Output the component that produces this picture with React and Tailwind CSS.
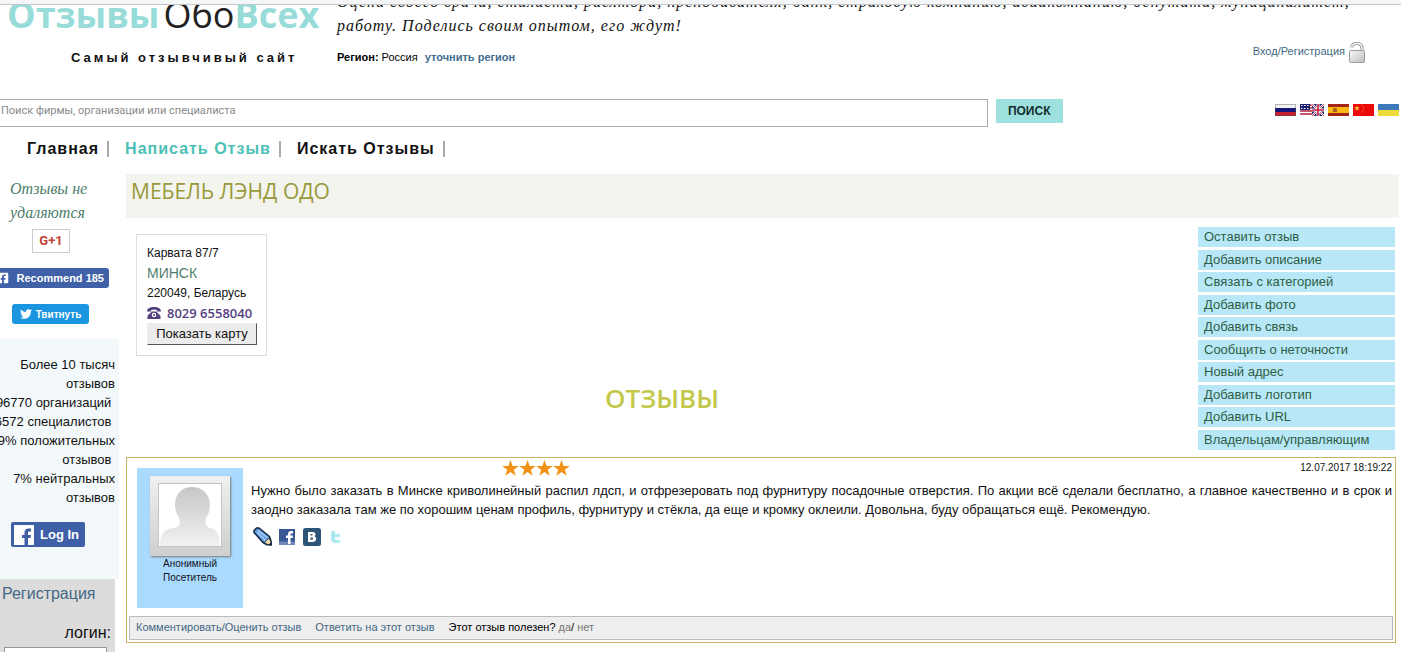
import { FaFacebookSquare, FaTwitter } from 'react-icons/fa';

const ACTIONS = [
  'Оставить отзыв',
  'Добавить описание',
  'Связать с категорией',
  'Добавить фото',
  'Добавить связь',
  'Сообщить о неточности',
  'Новый адрес',
  'Добавить логотип',
  'Добавить URL',
  'Владельцам/управляющим',
];

const STATS = [
  'Более 10 тысяч',
  'отзывов',
  '96770 организаций ',
  '6572 специалистов ',
  '9% положительных',
  'отзывов ',
  '7% нейтральных',
  'отзывов',
];

function LockIcon() {
  return (
    <svg className="w-4 h-[21px]" viewBox="0 0 16 21">
      <defs>
        <linearGradient id="lock" x1="0" y1="0" x2="1" y2="1">
          <stop offset="0" stopColor="#fafafa" />
          <stop offset="1" stopColor="#bdbdbd" />
        </linearGradient>
      </defs>
      <path d="M2.5 5.5C3 2.5 5 1.5 8 1.5c3.5 0 5 2 5 5V9" fill="none" stroke="#8f8f8f" strokeWidth="3" />
      <path d="M2.5 5.5C3 2.5 5 1.5 8 1.5c3.5 0 5 2 5 5V9" fill="none" stroke="#f2f2f2" strokeWidth="1.5" />
      <rect x="0.5" y="8.5" width="15" height="12" rx="1" fill="url(#lock)" stroke="#9a9a9a" />
    </svg>
  );
}

function Flags() {
  return (
    <div className="flex items-center gap-1">
      <a href="#ru" aria-label="Русский">
        <svg className="w-[21px] h-3" viewBox="0 0 21 12">
          <rect width="21" height="12" fill="#f4f4f4" />
          <rect y="4" width="21" height="4" fill="#15157a" />
          <rect y="8" width="21" height="4" fill="#c4202f" />
          <rect x="0.5" y="0.5" width="20" height="11" fill="none" stroke="#555" strokeOpacity="0.4" />
        </svg>
      </a>
      <a href="#en" aria-label="English">
        <svg className="w-6 h-3" viewBox="0 0 24 12">
          <rect width="12" height="12" fill="#fff" />
          <path d="M0 1h12M0 4h12M0 7h12M0 10h12" stroke="#b3203c" strokeWidth="1.5" />
          <rect width="10" height="6" fill="#1c2070" />
          <path d="M1 1.5h8M1 4.5h8" stroke="#fff" strokeDasharray="1.5 1.5" />
          <rect x="12" width="12" height="12" fill="#1c2070" />
          <path d="M12 0l12 12M24 0L12 12" stroke="#fff" strokeWidth="2" />
          <path d="M12 0l12 12M24 0L12 12" stroke="#c4203c" strokeWidth="0.7" />
          <path d="M18 0v12M12 6h12" stroke="#fff" strokeWidth="3" />
          <path d="M18 0v12M12 6h12" stroke="#c4203c" strokeWidth="1.6" />
        </svg>
      </a>
      <a href="#es" aria-label="Español">
        <svg className="w-[21px] h-3" viewBox="0 0 21 12">
          <rect width="21" height="12" fill="#a32417" />
          <rect y="3" width="21" height="6" fill="#fbb914" />
          <path d="M5 8V5l1-1h2l1 1v3z" fill="#a8601c" />
        </svg>
      </a>
      <a href="#zh" aria-label="中文">
        <svg className="w-[21px] h-3" viewBox="0 0 21 12">
          <rect width="21" height="12" fill="#ea0a0a" />
          <path d="M4 1.5l.8 1.8 2 .1-1.6 1.2.6 2L4 5.5 2.2 6.6l.6-2L1.2 3.4l2-.1z" fill="#ffc93c" />
          <path d="M8.5 1h1v1h-1zM10 3h1v1h-1zM10 5.5h1v1h-1zM8.5 7.5h1v1h-1z" fill="#ff8a2a" />
        </svg>
      </a>
      <a href="#uk" aria-label="Українська">
        <svg className="w-[21px] h-3" viewBox="0 0 21 12">
          <rect width="21" height="6" fill="#3d78b8" />
          <rect y="6" width="21" height="6" fill="#ecdc3a" />
        </svg>
      </a>
    </div>
  );
}

function PhoneIcon() {
  return (
    <svg className="w-[14px] h-3" viewBox="0 0 14 12" fill="#54417f">
      <path d="M0 4.5C0 1.5 2.5 0 7 0s7 1.5 7 4.5h-4V3.2C9 2.7 5 2.7 4 3.2v1.3z" />
      <path fillRule="evenodd" d="M4.5 4.5h5c.5 1.8 4 3 4 5V12H.5V9.5c0-2 3.5-3.2 4-5zM7 5.8a2.2 2.2 0 100 4.4 2.2 2.2 0 000-4.4z" />
      <circle cx="7" cy="8" r="1" />
    </svg>
  );
}

function Stars() {
  return (
    <svg className="w-[68px] h-4" viewBox="0 0 68 16" fill="#f39016" role="img" aria-label="4 звезды">
      {[0, 17, 34, 51].map((x) => (
        <path key={x} transform={`translate(${x} 0)`} d="M8.5 0l2.1 5.9h6.2l-5 3.8 1.9 6.1-5.2-3.7-5.2 3.7 1.9-6.1-5-3.8h6.2z" />
      ))}
    </svg>
  );
}

function Avatar() {
  return (
    <svg className="w-20 h-20 shadow-[1px_1px_2px_#777]" viewBox="0 0 80 80">
      <defs>
        <linearGradient id="frame" x1="0" y1="0" x2="0" y2="1">
          <stop offset="0" stopColor="#f0f0f0" />
          <stop offset="1" stopColor="#cfcfcf" />
        </linearGradient>
        <linearGradient id="person" x1="0" y1="0" x2="0" y2="1">
          <stop offset="0" stopColor="#c6c6c6" />
          <stop offset="1" stopColor="#f2f2f2" />
        </linearGradient>
      </defs>
      <rect width="80" height="80" fill="url(#frame)" />
      <rect x="8.5" y="7.5" width="63" height="63" fill="#fff" stroke="#c4c4c4" />
      <path d="M10 70c0-10 3-15 9-17 5-1 9-2 10-4 1-3 1-5-1-9-2-4-3-7-3-11 0-11 7-18 17-18s18 7 18 18c0 4-1 8-3 11-2 4-2 6-1 9 1 2 3 3 7 4 4 2 7 6 7 17z" fill="url(#person)" />
    </svg>
  );
}

function ShareIcons() {
  return (
    <div className="flex items-center mt-2 ml-0.5">
      <a href="#edit" aria-label="Изменить">
        <svg className="w-[19px] h-[19px]" viewBox="0 0 19 19">
          <path d="M1 5.5V3.5L3.5 1H6l10.5 8.5L18 14l.3 4-4.3-.2-4-2.3z" fill="#5f9ade" stroke="#14243c" strokeWidth="1.5" strokeLinejoin="round" />
          <path d="M4 5l8.5 8.5M5.500 3.500l9 7.500" stroke="#a9d0f6" strokeWidth="1.5" />
          <path d="M11.5 15.500L16 10.800l1.700 3.500.2 3.400-3.600-.3z" fill="#ecd9b2" stroke="#14243c" strokeWidth="0.8" />
          <path d="M15.5 17.800l2.400-2.300.4 2.700z" fill="#14243c" />
        </svg>
      </a>
      <a href="#facebook" aria-label="Facebook" className="ml-[7px]">
        <svg className="w-4 h-4" viewBox="0 0 16 16">
          <rect width="16" height="16" fill="#3a5795" />
          <rect y="12.5" width="16" height="3.5" fill="#7187b8" />
          <path d="M9 15V9H7V6.5h2V5c0-2 1.2-3 3-3h2v2.4h-1.3c-.8 0-1.2.3-1.2 1.1v1H14L13.7 9h-2.2v6z" fill="#fff" />
        </svg>
      </a>
      <a href="#vk" aria-label="ВКонтакте" className="ml-2">
        <svg className="w-[18px] h-[18px]" viewBox="0 0 18 18">
          <rect width="18" height="18" rx="2.5" fill="#2c5578" />
          <path fillRule="evenodd" d="M5 4h4.5c2 0 3 .8 3 2.3 0 1-.5 1.7-1.3 2 1.3.3 2 1.2 2 2.5 0 2-1.4 3.2-3.7 3.2H5zm2.5 2v1.6h1.2c1.4 0 1.4-1.6 0-1.6zm0 3.5v2.2h1.5c1.6 0 1.6-2.2 0-2.2z" fill="#fff" />
        </svg>
      </a>
      <a href="#twitter" aria-label="Twitter" className="ml-1.5">
        <svg className="w-[18px] h-4" viewBox="0 0 18 16">
          <path d="M4 2h4v3h5v3H8v1.5c0 1 .5 1.5 1.5 1.5H13v3H8.5C5.5 14 4 12.5 4 10z" fill="#a6e6ee" stroke="#d9f6f8" />
        </svg>
      </a>
    </div>
  );
}

function Header() {
  return (
    <header className="flex h-[94px] overflow-hidden">
      <div className="w-[337px] h-[62px] shrink-0 flex flex-col justify-end">
        <a href="#home" className="block pl-[7px] text-4xl leading-10 font-bold text-[#97dcd9] font-['Open_Sans',sans-serif] whitespace-nowrap">
          Отзывы<span className="font-normal text-[#222] pl-1">Обо</span>Всех
        </a>
        <p className="mt-3.5 pl-[71px] text-[13px] leading-[18px] font-bold text-[#111] tracking-[3px] whitespace-nowrap">Самый отзывчивый сайт</p>
      </div>
      <div className="h-[62px] flex-1 flex flex-col justify-end whitespace-nowrap">
        <p className="text-base leading-6 italic tracking-[1px] text-[#111] font-['Liberation_Serif',serif]">
          Оцени своего врача, стилиста, риелтора, преподавателя, банк, страховую компанию, авиакомпанию, депутата, муниципалитет,
          <br />
          работу. Поделись своим опытом, его ждут!
        </p>
        <p className="mt-2.5 pb-px text-[11px] leading-[18px] text-black">
          <b>Регион:</b> Россия <a href="#region" className="font-bold text-[#3f6c8f] ml-1">уточнить регион</a>
        </p>
      </div>
      <a href="#login" className="w-[151px] pr-9 h-[21px] mt-[37px] -ml-[151px] flex items-start justify-end gap-1 text-[11px] leading-[18px] text-[#446884]">
        Вход/Регистрация
        <LockIcon />
      </a>
    </header>
  );
}

function SearchBar() {
  return (
    <form className="flex items-start">
      <input
        type="search"
        aria-label="Поиск"
        placeholder="Поиск фирмы, организации или специалиста"
        className="w-[70.5%] h-7 pb-1.5 pl-px border border-l-0 border-[#aaa] text-[11px] placeholder:text-[#8b8b8b] font-['Roboto',sans-serif]"
      />
      <button type="button" className="ml-2 w-[67px] h-6 bg-[#9ee0de] text-xs font-bold text-[#14302f]">ПОИСК</button>
      <div className="ml-auto mt-[5px] pr-0.5">
        <Flags />
      </div>
    </form>
  );
}

function Nav() {
  return (
    <nav className="flex items-center h-[43px] mb-1 pl-[27px] text-base font-bold tracking-[1px] text-[#111] whitespace-nowrap">
      <a href="#home" className="pr-2 border-r-2 border-[#aaa] leading-4">Главная</a>
      <a href="#write" className="ml-4 pr-2 border-r-2 border-[#aaa] leading-4 text-[#4cc0b6]">Написать Отзыв</a>
      <a href="#search" className="ml-4 pr-2 border-r-2 border-[#aaa] leading-4">Искать Отзывы</a>
    </nav>
  );
}

function Sidebar() {
  return (
    <aside className="w-[119px] shrink-0 overflow-hidden">
      <p className="pt-[3px] pl-2.5 text-base leading-6 italic text-[#4d7d69] font-['Liberation_Serif',serif]">
        Отзывы не
        <br />
        удаляются
      </p>
      <button type="button" className="block mt-1 ml-8 w-[38px] h-6 border border-[#ccc] text-[13px] font-bold text-[#c3403a] font-['Roboto',sans-serif]">G+1</button>
      <button type="button" className="flex items-center justify-end gap-2 w-[109px] h-5 mt-[15px] pr-[5px] rounded-r-[3px] bg-[#4060a8] text-[11px] font-bold text-white whitespace-nowrap">
        <FaFacebookSquare className="w-3 h-3 shrink-0" />
        Recommend 185
      </button>
      <button type="button" className="flex items-center justify-center gap-1 w-[77px] h-5 mt-4 ml-3 rounded-[3px] bg-[#1b95e0] text-[10px] font-bold text-white">
        <FaTwitter className="w-3 h-3 shrink-0" />
        Твитнуть
      </button>
      <div className="mt-[15px] pt-4 pb-8 bg-[#f3f9fa]">
        <div className="flex flex-col items-end pr-1 text-[13px] leading-[19px] text-[#111] whitespace-pre">
          {STATS.map((line, i) => (
            <span key={i}>{line}</span>
          ))}
        </div>
        <button type="button" className="flex items-center gap-1.5 w-[74px] h-[25px] mt-[15px] ml-[11px] pl-[3px] rounded-[2px] bg-[#3f5fa6] text-[13px] font-bold text-white whitespace-nowrap">
          <svg className="w-5 h-5 shrink-0" viewBox="0 0 20 20">
            <rect width="20" height="20" fill="#fff" />
            <path d="M10.5 20v-7H8v-3h2.5V7.5C10.5 5 12 3.5 14.5 3.5H17v3h-1.5c-1.2 0-1.5.5-1.5 1.5v2h3l-.5 3H14v7z" fill="#3f5fa6" />
          </svg>
          Log In
        </button>
      </div>
      <div className="w-[115px] pt-1 pb-10 bg-[#dcdcdc]">
        <a href="#register" className="block pl-0.5 text-base leading-[22px] text-[#446884]">Регистрация</a>
        <label htmlFor="login" className="block mt-[18px] pr-1 text-right text-base leading-5 text-[#111]">логин:</label>
        <input id="login" type="text" className="block mt-1 ml-1 w-[103px] h-6 border border-[#999] bg-white" />
      </div>
    </aside>
  );
}

function AddressCard() {
  return (
    <div className="w-[131px] ml-2.5 pt-2 pb-2.5 px-2.5 border border-[#ddd] text-xs leading-5 text-[#111] whitespace-nowrap">
      <p>Карвата 87/7</p>
      <p className="text-sm leading-5 text-[#4f7f6e]">МИНСК</p>
      <p>220049, Беларусь</p>
      <p className="flex items-center gap-1.5 text-[13px] leading-5 font-semibold text-[#54417f] font-['Open_Sans',sans-serif]">
        <PhoneIcon />
        8029 6558040
      </p>
      <button type="button" className="block w-[110px] h-[22px] border border-t-[#eee] border-l-[#eee] border-r-[#555] border-b-[#555] bg-[#ececec] text-[13px] leading-5">Показать карту</button>
    </div>
  );
}

function Review() {
  return (
    <article className="mr-[5px] p-0.5 border border-[#c9b264]">
      <div className="flex">
        <div className="w-[106px] h-[140px] mt-2 ml-2 pt-2 flex flex-col items-center bg-[#aadbff] text-[10px] leading-[14px] text-center text-[#112]">
          <Avatar />
          <p className="mt-px">
            Анонимный
            <br />
            Посетитель
          </p>
        </div>
        <div className="flex-1 ml-2 mr-px">
          <div className="flex items-start justify-between h-[21px]">
            <div className="ml-[22%]">
              <Stars />
            </div>
            <time className="text-[10px] leading-4 text-[#111]">12.07.2017 18:19:22</time>
          </div>
          <p className="text-[13px] leading-[19px] text-justify text-[#111]">
            Нужно было заказать в Минске криволинейный распил лдсп, и отфрезеровать под фурнитуру посадочные отверстия. По акции всё сделали бесплатно, а главное качественно и в срок и заодно заказала там же по хорошим ценам профиль, фурнитуру и стёкла, да еще и кромку оклеили. Довольна, буду обращаться ещё. Рекомендую.
          </p>
          <ShareIcons />
        </div>
      </div>
      <div className="flex items-center h-6 mt-2 pl-1.5 pb-0.5 border border-[#bbb] bg-[#eee] text-[11px] text-[#446884] whitespace-nowrap">
        <a href="#comment">Комментировать/Оценить отзыв</a>
        <a href="#reply" className="ml-3.5">Ответить на этот отзыв</a>
        <p className="ml-3.5 text-black">
          Этот отзыв полезен? <a href="#yes" className="text-[#777]">да</a>/ <a href="#no" className="text-[#777]">нет</a>
        </p>
      </div>
    </article>
  );
}

export default function App() {
  return (
    <div className="h-screen overflow-hidden bg-white font-['Liberation_Sans',Arial,sans-serif]">
      <div className="h-[5px] border-b border-[#c4c7ca] bg-[#f4f6f8]" />
      <Header />
      <SearchBar />
      <Nav />
      <div className="flex">
        <Sidebar />
        <main className="flex-1 min-w-0 ml-[7px]">
          <h1 className="h-11 mr-0.5 pl-[5px] text-[21px] leading-[34px] text-[#98993a] bg-[#f4f4ef] font-['Open_Sans',sans-serif]">МЕБЕЛЬ ЛЭНД ОДО</h1>
          <div className="flex pt-[9px] pb-[7px]">
            <div className="flex-1 pt-[7px]">
              <AddressCard />
              <h2 className="mt-[22px] text-center text-[26px] leading-10 font-semibold text-[#c3c84a] font-['Open_Sans',sans-serif]">ОТЗЫВЫ</h2>
            </div>
            <ul className="w-[197px] h-[223px] mr-1.5 flex flex-col justify-between text-[13px] leading-5 text-[#2f5d45]">
              {ACTIONS.map((label) => (
                <li key={label} className="bg-[#b8e8f7]">
                  <a href="#action" className="block pl-1.5">{label}</a>
                </li>
              ))}
            </ul>
          </div>
          <Review />
        </main>
      </div>
    </div>
  );
}
